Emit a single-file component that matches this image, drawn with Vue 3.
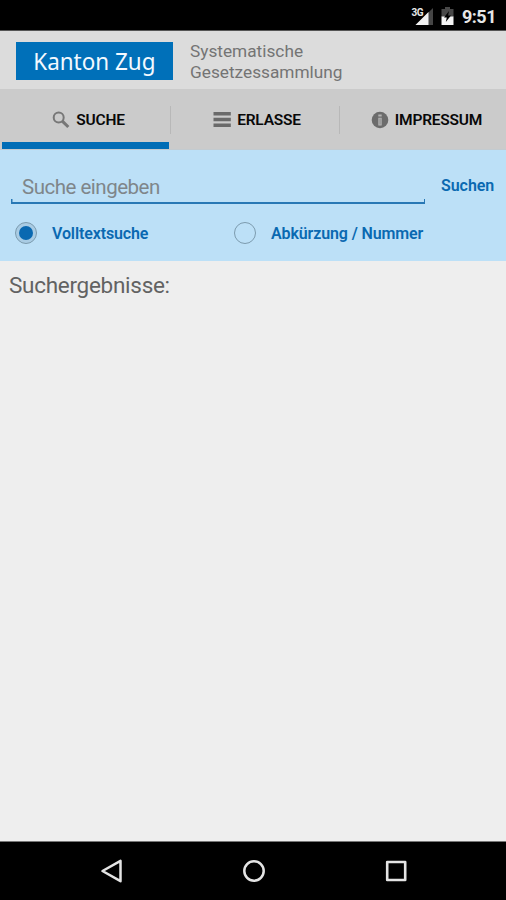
<script setup>
import { ref } from 'vue'

const tabs = [
  { id: 'suche', label: 'SUCHE' },
  { id: 'erlasse', label: 'ERLASSE' },
  { id: 'impressum', label: 'IMPRESSUM' },
]
const activeTab = ref('suche')
const mode = ref('volltext')
</script>

<template>
  <div class="screen">
    <div class="status">
      <svg class="signal" width="24" height="20" viewBox="0 0 24 20">
        <path d="M23 1V18H5.500Z" fill="#454545" />
        <path d="M18.500 5V18H5.500Z" fill="#f2f2f2" />
        <text class="net" x="1.500" y="8.500">3G</text>
      </svg>
      <svg class="battery" width="13" height="18" viewBox="0 0 12 18">
        <path d="M0 2H3.500V0H8.500V2H12V10H0Z" fill="#484848" />
        <path d="M0 9.500H12V18H0Z" fill="#f4f4f4" />
        <path d="M7.500 4L2.500 10.500H5.300L4.300 15L9.500 8.500H6.600Z" fill="#000" />
      </svg>
      <span class="time">9:51</span>
    </div>

    <header class="header">
      <div class="logo"><span class="logo-text">Kanton Zug</span></div>
      <div class="title">Systematische<br />Gesetzessammlung</div>
    </header>

    <nav class="tabs">
      <button
        v-for="tab in tabs"
        :key="tab.id"
        class="tab"
        :class="[tab.id, { active: activeTab === tab.id }]"
        @click="activeTab = tab.id"
      >
        <svg v-if="tab.id === 'suche'" class="icon" width="18" height="18" viewBox="0 0 18 18" fill="none" stroke="#777">
          <circle cx="6.700" cy="6.500" r="5" stroke-width="2" />
          <path d="M10.300 10.100L16.300 16" stroke-width="3" />
        </svg>
        <svg v-else-if="tab.id === 'erlasse'" class="icon" width="18" height="18" viewBox="0 0 18 18" fill="#6a6a6a">
          <path d="M0.500 1H17.800V4.400H0.500ZM0.500 6.800H17.800V10.200H0.500ZM0.500 12.600H17.800V16H0.500Z" />
        </svg>
        <svg v-else class="icon" width="18" height="18" viewBox="0 0 18 18">
          <circle cx="9" cy="9" r="8.300" fill="#6c6c6c" />
          <path d="M7.300 3.500H10.700V5.600H7.300ZM7.300 6.800H10.700V14.400H7.300Z" fill="#b4b4b4" />
          <path d="M8.600 7.500H9.500V13.600H8.600Z" fill="#858585" />
        </svg>
        <span class="tab-label">{{ tab.label }}</span>
      </button>
    </nav>

    <section class="search">
      <div class="query">
        <div class="field"><input class="input" type="text" placeholder="Suche eingeben" /></div>
        <button class="submit">Suchen</button>
      </div>
      <div class="modes">
        <div class="mode first" @click="mode = 'volltext'">
          <span class="radio" :class="{ checked: mode === 'volltext' }"></span>
          <span class="mode-label">Volltextsuche</span>
        </div>
        <div class="mode" @click="mode = 'nummer'">
          <span class="radio" :class="{ checked: mode === 'nummer' }"></span>
          <span class="mode-label">Abkürzung / Nummer</span>
        </div>
      </div>
    </section>

    <main class="results"><span>Suchergebnisse:</span></main>

    <footer class="navbar">
      <svg width="24" height="28" viewBox="0 0 24 28" fill="none" stroke="#e4e4e4" stroke-width="2.500" stroke-linejoin="round">
        <path d="M2.500 14L20.500 3.800V24.200Z" />
      </svg>
      <svg width="24" height="28" viewBox="0 0 24 28" fill="none" stroke="#e4e4e4" stroke-width="2.500">
        <circle cx="12" cy="14" r="9.700" />
      </svg>
      <svg width="24" height="28" viewBox="0 0 24 28" fill="none" stroke="#e4e4e4" stroke-width="2.600" stroke-linejoin="round">
        <rect x="3.200" y="5" width="18" height="18" />
      </svg>
    </footer>
  </div>
</template>

<style>
body {
  margin: 0;
}
</style>

<style scoped>
.screen {
  width: 506px;
  height: 900px;
  display: flex;
  flex-direction: column;
  overflow: hidden;
  background: #eee;
  font-family: Roboto, "Liberation Sans", sans-serif;
}
button,
input {
  font: inherit;
  border: 0;
  background: none;
  padding: 0;
  margin: 0;
  border-radius: 0;
  outline: none;
}
.status {
  height: 31px;
  flex: none;
  box-sizing: border-box;
  padding: 7px 10px 0 0;
  background: #000;
  border-bottom: 1px solid #555;
  display: flex;
  justify-content: flex-end;
  align-items: flex-start;
}
.signal {
  margin-right: 7px;
}
.net {
  font-size: 10px;
  font-weight: 700;
  letter-spacing: -0.5px;
  fill: #e8e8e8;
  stroke: #000;
  stroke-width: 1.5px;
  paint-order: stroke;
}
.battery {
  margin-right: 8px;
}
.time {
  color: #e6e6e6;
  font-size: 18px;
  font-weight: 700;
  line-height: 20px;
  letter-spacing: -0.5px;
}
.header {
  height: 58px;
  flex: none;
  box-sizing: border-box;
  padding: 11px 16px 0;
  display: flex;
  align-items: flex-start;
  background: #dcdcdc;
}
.logo {
  width: 157px;
  height: 38px;
  margin-right: 17px;
  background: #0070b9;
  color: #f3f9ff;
  font-family: "Noto Sans", "Open Sans", sans-serif;
  font-size: 24px;
  line-height: 37px;
  text-align: center;
  white-space: nowrap;
}
.logo-text {
  display: inline-block;
  transform: scaleX(0.935);
}
.title {
  margin-top: -1px;
  color: #747474;
  font-size: 17.25px;
  line-height: 21px;
  white-space: nowrap;
}
.tabs {
  height: 61px;
  flex: none;
  box-sizing: border-box;
  display: grid;
  grid-template-columns: 169px 169px 168px;
  background: #cbcbcb;
  border-bottom: 1px solid #c3cbd0;
}
.tab {
  position: relative;
  display: flex;
  align-items: center;
  justify-content: center;
  gap: 6px;
  padding-top: 2px;
  color: #080808;
  font-size: 15.5px;
  font-weight: 600;
  letter-spacing: -0.2px;
  white-space: nowrap;
}
.tab.suche {
  padding-left: 8px;
}
.tab.erlasse {
  padding-left: 7px;
}
.tab.impressum {
  padding-left: 9px;
}
.tab:not(:last-child)::before {
  content: "";
  position: absolute;
  right: -2px;
  top: 17px;
  width: 1px;
  height: 28px;
  background: #b8b8b8;
}
.tab.active::after {
  content: "";
  position: absolute;
  left: 2px;
  right: 0;
  bottom: 0;
  height: 7px;
  background: #006db6;
}
.icon {
  flex: none;
}
.search {
  height: 111px;
  flex: none;
  box-sizing: border-box;
  padding: 13px 10px 0 11px;
  background: #bce0f7;
}
.query {
  height: 42px;
  display: flex;
  align-items: flex-start;
}
.field {
  width: 414px;
  height: 41px;
  box-sizing: border-box;
  padding: 0 11px;
  background:
    linear-gradient(#2878b5, #2878b5) left bottom / 1.5px 5px no-repeat,
    linear-gradient(#2878b5, #2878b5) right bottom / 1.5px 5px no-repeat,
    linear-gradient(#2878b5, #2878b5) left bottom / 100% 2px no-repeat;
}
.input {
  width: 100%;
  height: 47px;
  color: #555;
  font-size: 20.5px;
  letter-spacing: -0.5px;
}
.input::placeholder {
  color: #7f868a;
  opacity: 1;
}
.submit {
  margin-left: 16px;
  height: 45px;
  color: #0a69b1;
  font-size: 16px;
  font-weight: 600;
  letter-spacing: -0.05px;
}
.modes {
  margin-top: 15px;
  display: flex;
  padding-left: 4px;
}
.mode {
  display: flex;
  align-items: center;
  height: 26px;
}
.mode.first {
  width: 219px;
}
.radio {
  width: 22px;
  height: 22px;
  box-sizing: border-box;
  border: 1px solid #7c9bae;
  border-radius: 50%;
  display: flex;
  align-items: center;
  justify-content: center;
}
.radio.checked {
  background: #a9cce4;
}
.radio.checked::after {
  content: "";
  width: 14px;
  height: 14px;
  border-radius: 50%;
  background: #0a69b1;
}
.mode-label {
  margin-left: 15px;
  color: #0a69b1;
  font-size: 16px;
  font-weight: 600;
  letter-spacing: -0.12px;
  white-space: nowrap;
}
.results {
  flex: 1;
  padding: 10px 9px 0;
  color: #626262;
  font-size: 22.5px;
  line-height: 28px;
  letter-spacing: -0.28px;
}
.navbar {
  height: 59px;
  flex: none;
  box-sizing: border-box;
  background: #000;
  border-top: 1px solid #777;
  display: flex;
  align-items: center;
  justify-content: space-between;
  padding: 0 98px 0 100px;
}
</style>
